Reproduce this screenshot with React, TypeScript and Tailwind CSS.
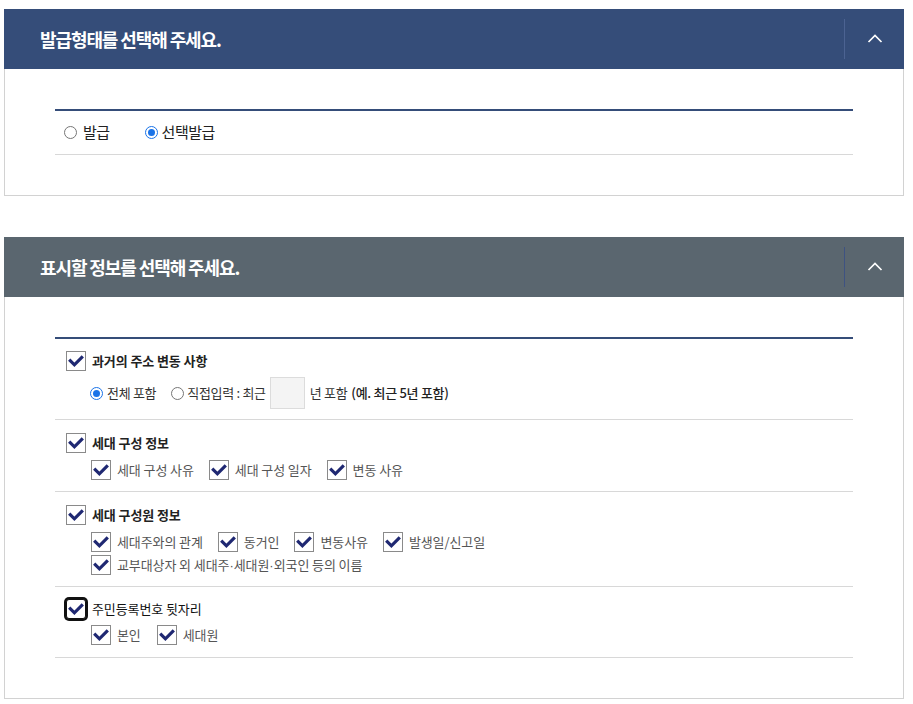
import React from "react";

const FONT = { fontFamily: '"Noto Sans CJK KR", "Noto Sans", sans-serif' };

function Chevron() {
  return (
    <svg width="16" height="9" viewBox="0 0 16 9" fill="none">
      <path d="M1.5 8 L8 1.5 L14.5 8" stroke="#ffffff" strokeWidth="1.7" />
    </svg>
  );
}

function Header({ title, bg, divider }: { title: string; bg: string; divider: string }) {
  return (
    <div className={`flex h-[60px] items-center ${bg}`}>
      <div className="flex-1 pl-[36px] text-[18px] font-bold tracking-[-1.1px] text-white">{title}</div>
      <div className={`h-[40px] w-px ${divider}`} />
      <div className="flex w-[59px] items-center justify-center pb-[1px]">
        <Chevron />
      </div>
    </div>
  );
}

function Check({ focused = false }: { focused?: boolean }) {
  return (
    <span
      className={
        focused
          ? "flex h-5 w-5 shrink-0 items-center justify-center rounded-[3px] border border-[#111] bg-white shadow-[0_0_0_2px_#111]"
          : "flex h-5 w-5 shrink-0 items-center justify-center border border-[#8a8a8a] bg-white"
      }
    >
      <svg width="18" height="18" viewBox="0 0 18 18" fill="none">
        <path d="M2.2 7.6 L7.4 12.8 L15.8 4.4" stroke="#1f2872" strokeWidth="3.2" strokeLinejoin="miter" />
      </svg>
    </span>
  );
}

function Radio({ checked }: { checked: boolean }) {
  return checked ? (
    <span className="flex h-[13px] w-[13px] shrink-0 items-center justify-center rounded-full border-[1.5px] border-[#1a73e8] bg-white">
      <span className="h-[7px] w-[7px] rounded-full bg-[#1a73e8]" />
    </span>
  ) : (
    <span className="block h-[13px] w-[13px] shrink-0 rounded-full border border-[#767676] bg-white" />
  );
}

function SubItem({ label }: { label: React.ReactNode }) {
  return (
    <div className="flex items-center gap-[6px]">
      <Check />
      <span className="text-[13px] tracking-[-0.1px] text-[#555]">{label}</span>
    </div>
  );
}

function GroupTitle({ label, focused = false, bold = true }: { label: string; focused?: boolean; bold?: boolean }) {
  return (
    <div className="flex h-5 items-center gap-[6px] pl-[11px]">
      <Check focused={focused} />
      <span className={`text-[13px] tracking-[-0.1px] ${bold ? "font-semibold text-[#222]" : "font-normal text-[#111]"}`}>
        {label}
      </span>
    </div>
  );
}

function Dot() {
  return <span className="font-['Liberation_Sans'] tracking-normal">·</span>;
}

export default function App() {
  return (
    <div className="h-[704px] w-[913px] bg-white pl-[4px] pt-[9px]" style={FONT}>
      <div className="w-[900px]">
        <Header title="발급형태를 선택해 주세요." bg="bg-[#354d79]" divider="bg-[#4c6392]" />
        <div className="border-x border-b border-[#d2d2d2] px-[50px] pb-[40px] pt-[40px]">
          <div className="h-[2px] bg-[#354d79]" />
          <div className="flex h-[44px] items-center border-b border-[#d8d8d8] pl-[9px]">
            <div className="flex items-center gap-[6px]">
              <Radio checked={false} />
              <span className="text-[15px] tracking-[-0.5px] text-[#222]">발급</span>
            </div>
            <div className="ml-[35px] flex items-center gap-[4px]">
              <Radio checked={true} />
              <span className="text-[15px] tracking-[-0.5px] text-[#222]">선택발급</span>
            </div>
          </div>
        </div>

        <div className="h-[41px]" />

        <Header title="표시할 정보를 선택해 주세요." bg="bg-[#5a666f]" divider="bg-[#3e5282]" />
        <div className="border-x border-b border-[#d2d2d2] px-[50px] pb-[40px] pt-[40px]">
          <div className="h-[2px] bg-[#354d79]" />

          {/* group 1 */}
          <div className="border-b border-[#d8d8d8] pb-[10px] pt-[12px]">
            <GroupTitle label="과거의 주소 변동 사항" />
            <div className="mt-[6px] flex h-[32px] items-center pl-[35px] text-[13px] tracking-[-0.3px] text-[#333]">
              <Radio checked={true} />
              <span className="ml-[4px]">전체 포함</span>
              <span className="ml-[15px]">
                <Radio checked={false} />
              </span>
              <span className="ml-[3px]">직접입력 : 최근</span>
              <span className="ml-[4px] h-[32px] w-[35px] border border-[#dcdcdc] bg-[#f4f4f4]" />
              <span className="ml-[5px]">년 포함</span>
              <span className="ml-[4px] font-medium text-[#222]">(예. 최근 5년 포함)</span>
            </div>
          </div>

          {/* group 2 */}
          <div className="border-b border-[#d8d8d8] pb-[11px] pt-[13px]">
            <GroupTitle label="세대 구성 정보" />
            <div className="mt-[7px] flex h-5 items-center gap-[15px] pl-[36px]">
              <SubItem label="세대 구성 사유" />
              <SubItem label="세대 구성 일자" />
              <SubItem label="변동 사유" />
            </div>
          </div>

          {/* group 3 */}
          <div className="border-b border-[#d8d8d8] pb-[11px] pt-[13px]">
            <GroupTitle label="세대 구성원 정보" />
            <div className="mt-[7px] flex flex-col gap-[3px] pl-[36px]">
              <div className="flex h-5 items-center gap-[15px]">
                <SubItem label="세대주와의 관계" />
                <SubItem label="동거인" />
                <SubItem label="변동사유" />
                <SubItem label="발생일/신고일" />
              </div>
              <div className="flex h-5 items-center gap-[15px]">
                <SubItem
                  label={
                    <>
                      교부대상자 외 세대주<Dot />세대원<Dot />외국인 등의 이름
                    </>
                  }
                />
              </div>
            </div>
          </div>

          {/* group 4 */}
          <div className="border-b border-[#d8d8d8] pb-[12px] pt-[12px]">
            <GroupTitle label="주민등록번호 뒷자리" focused bold={false} />
            <div className="mt-[6px] flex h-5 items-center gap-[16px] pl-[36px]">
              <SubItem label="본인" />
              <SubItem label="세대원" />
            </div>
          </div>
        </div>
      </div>
    </div>
  );
}
